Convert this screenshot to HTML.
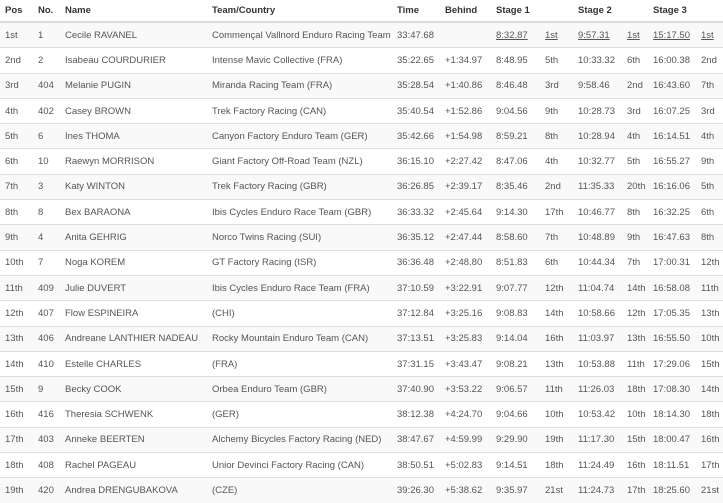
<!DOCTYPE html>
<html><head><meta charset="utf-8">
<style>
html,body{margin:0;padding:0;background:#fff;width:723px;height:503px;overflow:hidden}
table{border-collapse:collapse;table-layout:fixed;width:723px;font-family:"Liberation Sans",Arial,sans-serif;font-size:9.5px;color:#555}
th{font-weight:bold;color:#333;text-align:left;height:21px;padding:0 0 0 5px;border-bottom:2px solid #ddd;white-space:nowrap;vertical-align:middle}
td{height:24.3px;padding:0 0 0 5px;border-top:1px solid #ddd;white-space:nowrap;overflow:visible;vertical-align:middle}
tbody tr:nth-child(odd){background:#f9f9f9}
u{text-decoration:underline}
</style></head><body>
<table>
<colgroup><col style="width:33px"><col style="width:27px"><col style="width:147px"><col style="width:185px"><col style="width:48px"><col style="width:51px"><col style="width:49px"><col style="width:33px"><col style="width:49px"><col style="width:26px"><col style="width:48px"><col style="width:27px"></colgroup>
<thead><tr><th>Pos</th><th>No.</th><th>Name</th><th>Team/Country</th><th>Time</th><th>Behind</th><th>Stage 1</th><th></th><th>Stage 2</th><th></th><th>Stage 3</th><th></th></tr></thead>
<tbody>
<tr><td>1st</td><td>1</td><td>Cecile RAVANEL</td><td>Commençal Vallnord Enduro Racing Team</td><td>33:47.68</td><td></td><td><u>8:32.87</u></td><td><u>1st</u></td><td><u>9:57.31</u></td><td><u>1st</u></td><td><u>15:17.50</u></td><td><u>1st</u></td></tr>
<tr><td>2nd</td><td>2</td><td>Isabeau COURDURIER</td><td>Intense Mavic Collective (FRA)</td><td>35:22.65</td><td>+1:34.97</td><td>8:48.95</td><td>5th</td><td>10:33.32</td><td>6th</td><td>16:00.38</td><td>2nd</td></tr>
<tr><td>3rd</td><td>404</td><td>Melanie PUGIN</td><td>Miranda Racing Team (FRA)</td><td>35:28.54</td><td>+1:40.86</td><td>8:46.48</td><td>3rd</td><td>9:58.46</td><td>2nd</td><td>16:43.60</td><td>7th</td></tr>
<tr><td>4th</td><td>402</td><td>Casey BROWN</td><td>Trek Factory Racing (CAN)</td><td>35:40.54</td><td>+1:52.86</td><td>9:04.56</td><td>9th</td><td>10:28.73</td><td>3rd</td><td>16:07.25</td><td>3rd</td></tr>
<tr><td>5th</td><td>6</td><td>Ines THOMA</td><td>Canyon Factory Enduro Team (GER)</td><td>35:42.66</td><td>+1:54.98</td><td>8:59.21</td><td>8th</td><td>10:28.94</td><td>4th</td><td>16:14.51</td><td>4th</td></tr>
<tr><td>6th</td><td>10</td><td>Raewyn MORRISON</td><td>Giant Factory Off-Road Team (NZL)</td><td>36:15.10</td><td>+2:27.42</td><td>8:47.06</td><td>4th</td><td>10:32.77</td><td>5th</td><td>16:55.27</td><td>9th</td></tr>
<tr><td>7th</td><td>3</td><td>Katy WINTON</td><td>Trek Factory Racing (GBR)</td><td>36:26.85</td><td>+2:39.17</td><td>8:35.46</td><td>2nd</td><td>11:35.33</td><td>20th</td><td>16:16.06</td><td>5th</td></tr>
<tr><td>8th</td><td>8</td><td>Bex BARAONA</td><td>Ibis Cycles Enduro Race Team (GBR)</td><td>36:33.32</td><td>+2:45.64</td><td>9:14.30</td><td>17th</td><td>10:46.77</td><td>8th</td><td>16:32.25</td><td>6th</td></tr>
<tr><td>9th</td><td>4</td><td>Anita GEHRIG</td><td>Norco Twins Racing (SUI)</td><td>36:35.12</td><td>+2:47.44</td><td>8:58.60</td><td>7th</td><td>10:48.89</td><td>9th</td><td>16:47.63</td><td>8th</td></tr>
<tr><td>10th</td><td>7</td><td>Noga KOREM</td><td>GT Factory Racing (ISR)</td><td>36:36.48</td><td>+2:48.80</td><td>8:51.83</td><td>6th</td><td>10:44.34</td><td>7th</td><td>17:00.31</td><td>12th</td></tr>
<tr><td>11th</td><td>409</td><td>Julie DUVERT</td><td>Ibis Cycles Enduro Race Team (FRA)</td><td>37:10.59</td><td>+3:22.91</td><td>9:07.77</td><td>12th</td><td>11:04.74</td><td>14th</td><td>16:58.08</td><td>11th</td></tr>
<tr><td>12th</td><td>407</td><td>Flow ESPINEIRA</td><td>(CHI)</td><td>37:12.84</td><td>+3:25.16</td><td>9:08.83</td><td>14th</td><td>10:58.66</td><td>12th</td><td>17:05.35</td><td>13th</td></tr>
<tr><td>13th</td><td>406</td><td>Andreane LANTHIER NADEAU</td><td>Rocky Mountain Enduro Team (CAN)</td><td>37:13.51</td><td>+3:25.83</td><td>9:14.04</td><td>16th</td><td>11:03.97</td><td>13th</td><td>16:55.50</td><td>10th</td></tr>
<tr><td>14th</td><td>410</td><td>Estelle CHARLES</td><td>(FRA)</td><td>37:31.15</td><td>+3:43.47</td><td>9:08.21</td><td>13th</td><td>10:53.88</td><td>11th</td><td>17:29.06</td><td>15th</td></tr>
<tr><td>15th</td><td>9</td><td>Becky COOK</td><td>Orbea Enduro Team (GBR)</td><td>37:40.90</td><td>+3:53.22</td><td>9:06.57</td><td>11th</td><td>11:26.03</td><td>18th</td><td>17:08.30</td><td>14th</td></tr>
<tr><td>16th</td><td>416</td><td>Theresia SCHWENK</td><td>(GER)</td><td>38:12.38</td><td>+4:24.70</td><td>9:04.66</td><td>10th</td><td>10:53.42</td><td>10th</td><td>18:14.30</td><td>18th</td></tr>
<tr><td>17th</td><td>403</td><td>Anneke BEERTEN</td><td>Alchemy Bicycles Factory Racing (NED)</td><td>38:47.67</td><td>+4:59.99</td><td>9:29.90</td><td>19th</td><td>11:17.30</td><td>15th</td><td>18:00.47</td><td>16th</td></tr>
<tr><td>18th</td><td>408</td><td>Rachel PAGEAU</td><td>Unior Devinci Factory Racing (CAN)</td><td>38:50.51</td><td>+5:02.83</td><td>9:14.51</td><td>18th</td><td>11:24.49</td><td>16th</td><td>18:11.51</td><td>17th</td></tr>
<tr><td>19th</td><td>420</td><td>Andrea DRENGUBAKOVA</td><td>(CZE)</td><td>39:26.30</td><td>+5:38.62</td><td>9:35.97</td><td>21st</td><td>11:24.73</td><td>17th</td><td>18:25.60</td><td>21st</td></tr>
</tbody></table>
</body></html>
